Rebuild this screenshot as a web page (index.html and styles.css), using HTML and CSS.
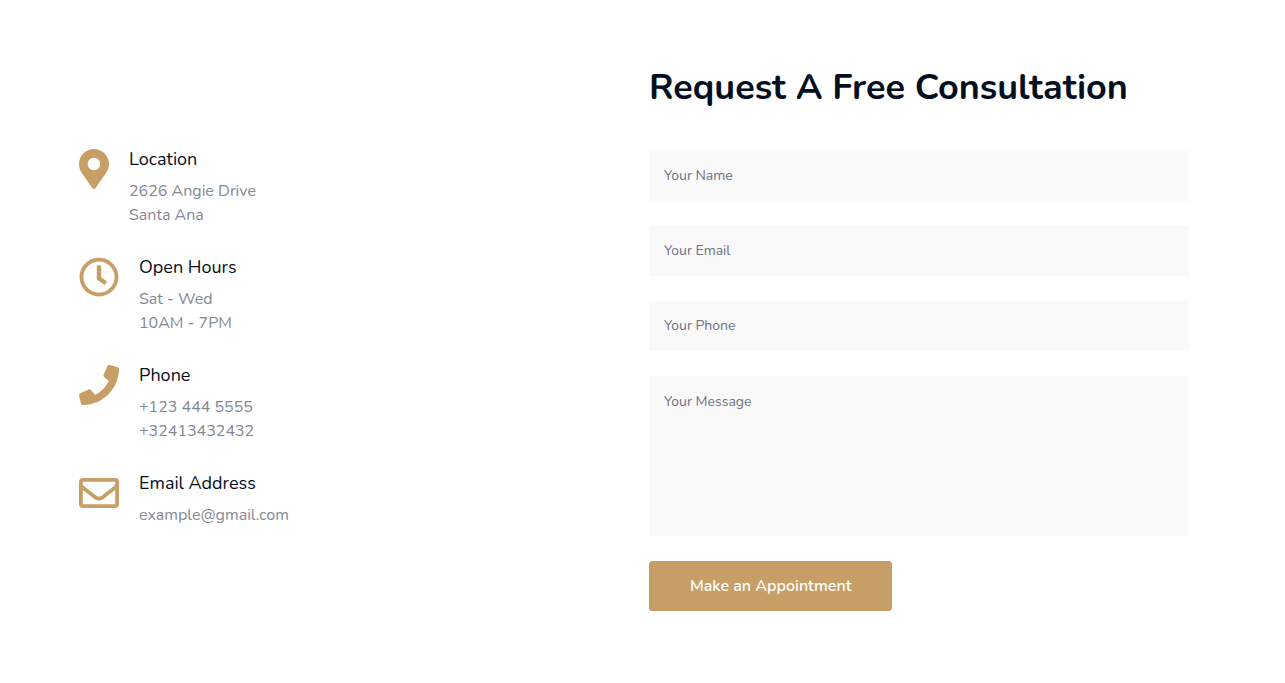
FILE: index.html
```html
<!DOCTYPE html>
<html lang="en">
<head>
<meta charset="utf-8">
<meta name="viewport" content="width=device-width, initial-scale=1">
<title>Request A Free Consultation</title>
<link rel="stylesheet" href="styles.css">
</head>
<body>
<main class="contact">
  <section class="info" aria-label="Contact details">
    <div class="item">
      <svg class="icon icon-pin" viewBox="0 0 384 512" aria-hidden="true"><path d="M172.268 501.67C26.97 291.031 0 269.413 0 192 0 85.961 85.961 0 192 0s192 85.961 192 192c0 77.413-26.97 99.031-172.268 309.67-9.535 13.774-29.93 13.773-39.464 0zM192 272c44.183 0 80-35.817 80-80s-35.817-80-80-80-80 35.817-80 80 35.817 80 80 80z"/></svg>
      <div>
        <h2 class="label">Location</h2>
        <p class="detail">2626 Angie Drive<br>Santa Ana</p>
      </div>
    </div>
    <div class="item">
      <svg class="icon" viewBox="0 0 512 512" aria-hidden="true"><path d="M256 8C119 8 8 119 8 256s111 248 248 248 248-111 248-248S393 8 256 8zm0 448c-110.500 0-200-89.500-200-200S145.500 56 256 56s200 89.500 200 200-89.500 200-200 200zm61.800-104.400l-84.900-61.700c-3.100-2.300-4.900-5.900-4.900-9.700V116c0-6.600 5.400-12 12-12h32c6.600 0 12 5.400 12 12v141.700l66.800 48.600c5.400 3.900 6.500 11.400 2.600 16.800L334.600 349c-3.900 5.300-11.400 6.500-16.800 2.600z"/></svg>
      <div>
        <h2 class="label">Open Hours</h2>
        <p class="detail">Sat - Wed<br>10AM - 7PM</p>
      </div>
    </div>
    <div class="item">
      <svg class="icon" viewBox="0 0 512 512" aria-hidden="true"><path d="M493.400 24.600l-104-24c-11.300-2.600-22.900 3.300-27.500 13.900l-48 112c-4.200 9.800-1.400 21.300 6.900 28l60.600 49.600c-36 76.700-98.900 140.500-177.200 177.200l-49.600-60.600c-6.800-8.300-18.200-11.100-28-6.900l-112 48C3.900 366.500-2 378.100.6 389.400l24 104C27.100 504.200 36.700 512 48 512c256.100 0 464-207.500 464-464 0-11.200-7.700-20.900-18.600-23.400z"/></svg>
      <div>
        <h2 class="label">Phone</h2>
        <p class="detail">+123 444 5555<br>+32413432432</p>
      </div>
    </div>
    <div class="item">
      <svg class="icon" viewBox="0 0 512 512" aria-hidden="true"><path d="M464 64H48C21.490 64 0 85.490 0 112v288c0 26.510 21.490 48 48 48h416c26.510 0 48-21.490 48-48V112c0-26.510-21.490-48-48-48zm0 48v40.805c-22.422 18.259-58.168 46.651-134.587 106.490-16.841 13.247-50.201 45.072-73.413 44.701-23.208.375-56.579-31.459-73.413-44.701C106.180 199.465 70.425 171.067 48 152.805V112h416zM48 400V214.398c22.914 18.251 55.409 43.862 104.938 82.646 21.857 17.205 60.134 55.186 103.062 54.955 42.717.231 80.509-37.199 103.053-54.947 49.528-38.783 82.032-64.401 104.947-82.653V400H48z"/></svg>
      <div>
        <h2 class="label">Email Address</h2>
        <p class="detail">example@gmail.com</p>
      </div>
    </div>
  </section>
  <section class="request">
    <h1 class="title">Request A Free Consultation</h1>
    <form class="form">
      <input class="field" type="text" placeholder="Your Name" aria-label="Your Name">
      <input class="field" type="email" placeholder="Your Email" aria-label="Your Email">
      <input class="field" type="tel" placeholder="Your Phone" aria-label="Your Phone">
      <textarea class="field message" placeholder="Your Message" aria-label="Your Message"></textarea>
      <button class="submit" type="submit">Make an Appointment</button>
    </form>
  </section>
</main>
</body>
</html>
```
FILE: styles.css
```css
* {
  box-sizing: border-box;
}

body {
  margin: 0;
  padding-right: 17px;
  background: #fff;
  color: #040e20;
  font-family: Nunito, "Open Sans", sans-serif;
}

.contact {
  display: grid;
  grid-template-columns: 1fr 1fr;
  gap: 30px;
  align-items: center;
  max-width: 1140px;
  margin: 0 auto;
  padding: 61px 15px 60px;
}

.info {
  display: grid;
  gap: 30px;
}

.item {
  display: flex;
  gap: 20px;
}

.icon {
  flex: none;
  width: 40px;
  height: 40px;
  fill: #c79e66;
}

.icon-pin {
  width: 30px;
}

.label {
  margin: 0 0 10px;
  font-size: 18px;
  font-weight: 400;
  line-height: 20px;
}

.detail {
  margin: 0;
  color: #848892;
  font-size: 16px;
  font-weight: 400;
  line-height: 24px;
}

.request {
  padding-bottom: 4px;
}

.title {
  margin: 0 0 36px;
  font-size: 36px;
  font-weight: 700;
  line-height: 54px;
}

.form {
  display: grid;
  gap: 25px;
  justify-items: start;
}

.field {
  width: 100%;
  height: 50px;
  padding: 0 15px 2px;
  border: 0;
  border-radius: 0;
  background: #f9f9f9;
  color: #040e20;
  font: inherit;
  font-size: 14px;
}

.field::placeholder {
  color: #6e7280;
  opacity: 1;
}

.message {
  display: block;
  height: 160px;
  padding: 16px 15px;
  resize: none;
}

.submit {
  height: 50px;
  padding: 0 40px;
  border: 1px solid #c79e66;
  border-radius: 3px;
  background: #c79e66;
  color: #fff;
  font: inherit;
  font-size: 16px;
  font-weight: 600;
}

@media (max-width: 760px) {
  body {
    padding-right: 0;
  }

  .contact {
    grid-template-columns: 1fr;
  }
}
```
